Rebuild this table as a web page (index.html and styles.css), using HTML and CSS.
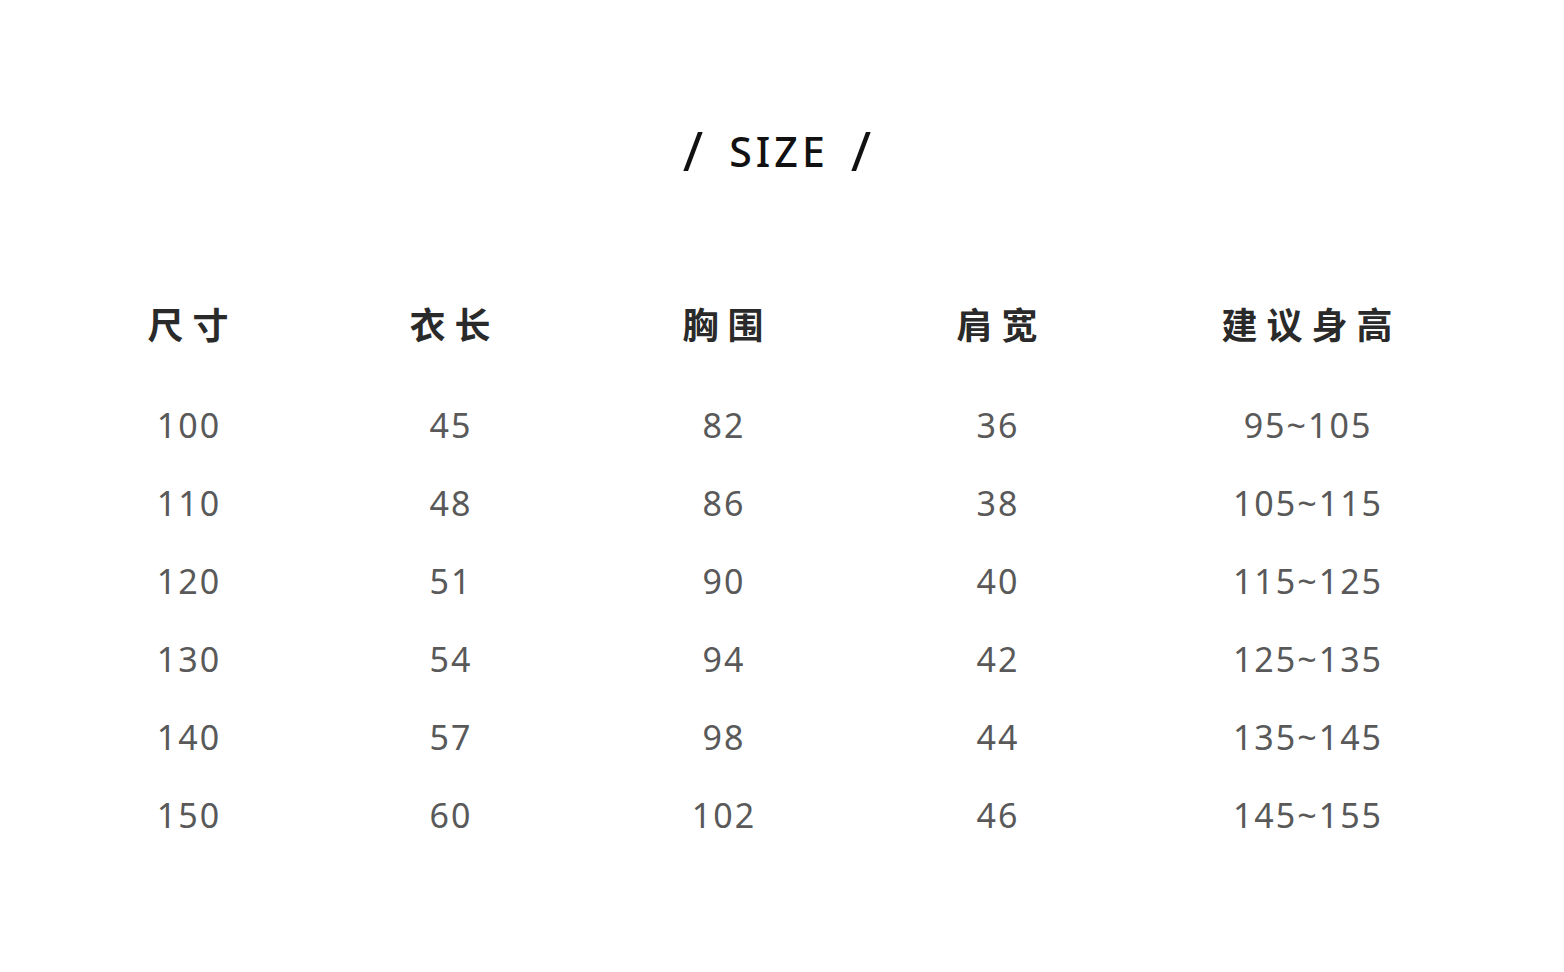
FILE: index.html
```html
<!DOCTYPE html>
<html lang="zh">
<head>
<meta charset="utf-8">
<title>SIZE</title>
<link rel="stylesheet" href="styles.css">
</head>
<body>
<main class="page">
  <h1 class="title"><span class="slash">/</span><span class="word">SIZE</span><span class="slash">/</span></h1>
  <div class="table">
    <div class="row head">
      <div class="cell">尺寸</div>
      <div class="cell">衣长</div>
      <div class="cell">胸围</div>
      <div class="cell">肩宽</div>
      <div class="cell">建议身高</div>
    </div>
    <div class="row">
      <div class="cell">100</div><div class="cell">45</div><div class="cell">82</div><div class="cell">36</div><div class="cell">95~105</div>
    </div>
    <div class="row">
      <div class="cell">110</div><div class="cell">48</div><div class="cell">86</div><div class="cell">38</div><div class="cell">105~115</div>
    </div>
    <div class="row">
      <div class="cell">120</div><div class="cell">51</div><div class="cell">90</div><div class="cell">40</div><div class="cell">115~125</div>
    </div>
    <div class="row">
      <div class="cell">130</div><div class="cell">54</div><div class="cell">94</div><div class="cell">42</div><div class="cell">125~135</div>
    </div>
    <div class="row">
      <div class="cell">140</div><div class="cell">57</div><div class="cell">98</div><div class="cell">44</div><div class="cell">135~145</div>
    </div>
    <div class="row">
      <div class="cell">150</div><div class="cell">60</div><div class="cell">102</div><div class="cell">46</div><div class="cell">145~155</div>
    </div>
  </div>
</main>
</body>
</html>
```

FILE: styles.css
```css
html, body {
  margin: 0;
  padding: 0;
  background: #ffffff;
}

.page {
  width: 1564px;
  height: 972px;
  display: flex;
  flex-direction: column;
  align-items: stretch;
  font-family: "Noto Sans", "Noto Sans CJK SC", sans-serif;
}

.title {
  margin: 116px 0 0 0;
  padding-right: 10px;
  height: 60px;
  line-height: 60px;
  display: flex;
  justify-content: center;
  align-items: baseline;
  font-size: 41px;
  font-weight: 500;
  color: #111111;
}

.title .word {
  letter-spacing: 4px;
  margin-left: 26px;
  margin-right: 22px;
}

.title .slash {
  font-size: 55px;
  font-weight: 400;
  line-height: 60px;
  position: relative;
  top: 4px;
}

.table {
  margin-top: 117px;
  padding-left: 58px;
  display: flex;
  flex-direction: column;
}

.row {
  display: grid;
  grid-template-columns: 260px 264px 282px 266px 354px;
  height: 78px;
  align-items: center;
}

.row.head {
  height: 60px;
  margin-bottom: 33px;
}

.cell {
  text-align: center;
  font-size: 34px;
  color: #595959;
  letter-spacing: 2px;
  padding-left: 2px;
  white-space: nowrap;
}

.head .cell {
  font-family: "Noto Sans CJK SC", sans-serif;
  font-size: 36px;
  font-weight: 700;
  color: #2a2a2a;
  letter-spacing: 9px;
  padding-left: 9px;
}
```
